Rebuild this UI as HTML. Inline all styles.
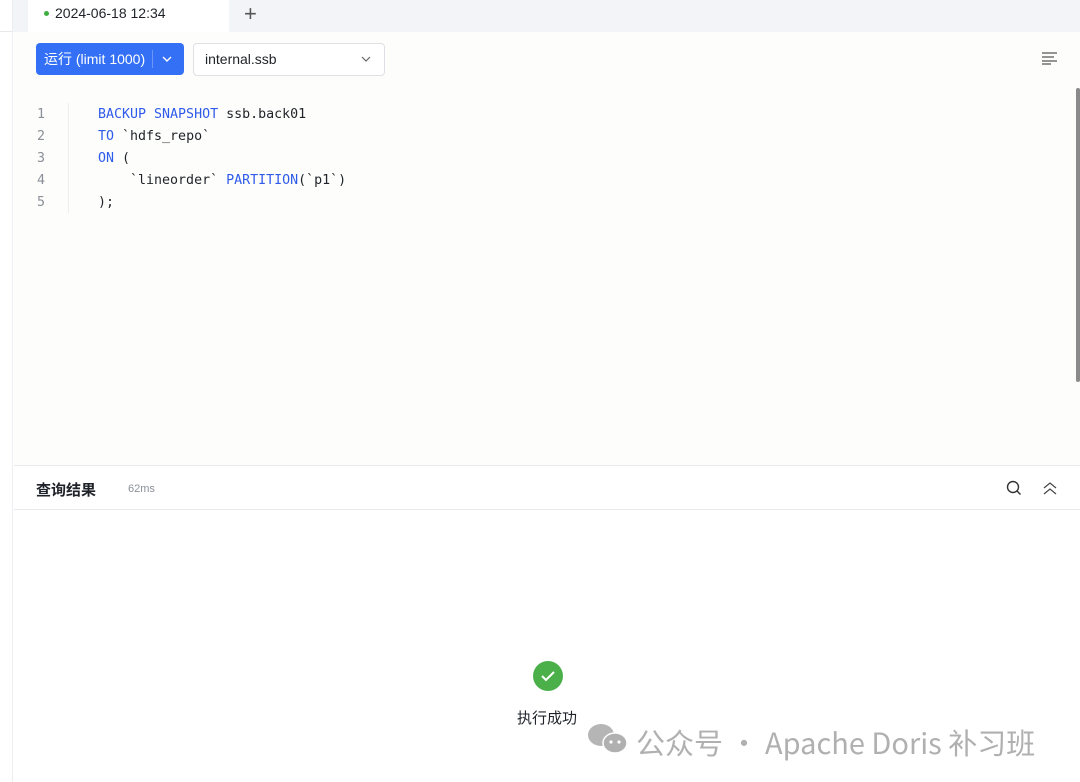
<!DOCTYPE html>
<html><head><meta charset="utf-8"><style>
*{margin:0;padding:0;box-sizing:border-box}
body{width:1080px;height:782px;overflow:hidden;background:#fff;font-family:"Liberation Sans","Noto Sans CJK SC",sans-serif;position:relative;color:#1f2329}
.abs{position:absolute}
.mono{font-family:"DejaVu Sans Mono","Liberation Mono",monospace;font-size:13.3px}
.kw{color:#2f5bea}
</style></head><body>
<div class="abs" style="left:0;top:0;width:13px;height:782px;background:#fff;border-right:1px solid #eceef2"></div>
<div class="abs" style="left:0;top:31px;width:13px;height:1px;background:#e6e8ec"></div>
<div class="abs" style="left:13px;top:0;width:1067px;height:32px;background:#f3f4f8"></div>
<div class="abs" style="left:28px;top:0;width:201px;height:32px;background:#fff"></div>
<div class="abs" style="left:44px;top:11px;width:5px;height:5px;border-radius:50%;background:#3fae3f"></div>
<div class="abs" style="left:55px;top:5px;font-size:14px;color:#1f2329">2024-06-18 12:34</div>
<div class="abs" style="left:244px;top:1px;font-size:22px;color:#555;font-weight:300">+</div>
<div class="abs" style="left:14px;top:32px;width:1066px;height:433px;background:#fdfdfb"></div>
<div class="abs" style="left:36px;top:43px;width:148px;height:32px;background:#3370f5;border-radius:4px;color:#fff;font-size:14px;line-height:32px;padding-left:8px">运行 (limit 1000)</div>
<div class="abs" style="left:152px;top:50px;width:1px;height:18px;background:#6b95f7"></div>
<svg class="abs" style="left:161px;top:54px" width="12" height="10"><path d="M2 3l4 4 4-4" stroke="#fff" stroke-width="1.4" fill="none"/></svg>
<div class="abs" style="left:193px;top:43px;width:192px;height:33px;border:1px solid #dee0e3;border-radius:4px;background:#fff;font-size:14px;line-height:31px;padding-left:11px">internal.ssb</div>
<svg class="abs" style="left:360px;top:54px" width="12" height="10"><path d="M2 3l4 4 4-4" stroke="#666" stroke-width="1.2" fill="none"/></svg>
<svg class="abs" style="left:1041px;top:51px" width="17" height="14"><path d="M1 2h15M1 6h12M1 10h15M1 13h9" stroke="#555" stroke-width="1.3"/></svg>
<div class="abs" style="left:68px;top:103px;width:1px;height:110px;background:#eceef0"></div>
<div class="abs mono" style="left:37px;top:104px;line-height:22px;color:#8a8f99">1<br>2<br>3<br>4<br>5</div>
<div class="abs mono" style="left:98px;top:104px;line-height:22px;color:#1f2329;white-space:pre"><span class="kw">BACKUP SNAPSHOT</span> ssb.back01
<span class="kw">TO</span> `hdfs_repo`
<span class="kw">ON</span> (
    `lineorder` <span class="kw">PARTITION</span>(`p1`)
);</div>
<div class="abs" style="left:1076px;top:88px;width:4px;height:294px;background:#8a8a8a;border-radius:2px"></div>
<div class="abs" style="left:14px;top:465px;width:1066px;height:1px;background:#e8eaed"></div>
<div class="abs" style="left:14px;top:509px;width:1066px;height:1px;background:#e8eaed"></div>
<div class="abs" style="left:36px;top:479px;font-size:15px;font-weight:bold;color:#1f2329">查询结果</div>
<div class="abs" style="left:128px;top:483px;font-size:11px;color:#8a8f99">62ms</div>
<svg class="abs" style="left:1006px;top:480px" width="16" height="16"><circle cx="7" cy="7" r="5.5" stroke="#333" stroke-width="1.4" fill="none"/><path d="M11 11l3.5 3.5" stroke="#333" stroke-width="1.4"/></svg>
<svg class="abs" style="left:1042px;top:480px" width="16" height="16"><path d="M2 8l6-5 6 5M2 14l6-5 6 5" stroke="#444" stroke-width="1.2" fill="none"/></svg>
<div class="abs" style="left:533px;top:661px;width:30px;height:30px;border-radius:50%;background:#4bb04a"></div>
<svg class="abs" style="left:533px;top:661px" width="30" height="30"><path d="M9 15l4 4 8-8" stroke="#fff" stroke-width="2" fill="none"/></svg>
<div class="abs" style="left:517px;top:707px;font-size:15px;color:#1f2329">执行成功</div>
<svg class="abs" style="left:586px;top:722px" width="44" height="34"><ellipse cx="15" cy="13" rx="13" ry="11" fill="#b5b5b5"/><ellipse cx="29" cy="21" rx="12" ry="10" fill="#b0b0b0" stroke="#fff" stroke-width="1.5"/><circle cx="25" cy="20" r="1.6" fill="#fff"/><circle cx="33" cy="20" r="1.6" fill="#fff"/></svg>
<div class="abs" style="left:636px;top:721px;font-size:29px;color:#b0b0b0;font-family:'Noto Sans CJK SC','Liberation Sans',sans-serif;white-space:nowrap">公众号 · Apache Doris 补习班</div>
</body></html>
